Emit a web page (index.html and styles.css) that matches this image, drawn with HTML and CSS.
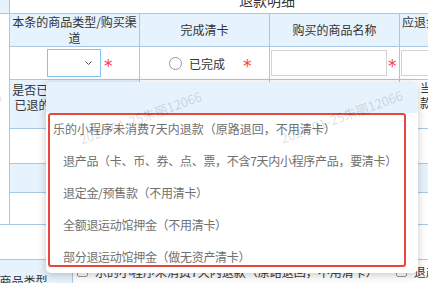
FILE: index.html
```html
<!DOCTYPE html>
<html lang="zh-CN">
<head>
    <meta charset="UTF-8">
    <meta name="viewport" content="width=device-width, initial-scale=1.0">
    <title>退款明细</title>
    <link rel="stylesheet" href="styles.css">
</head>
<body>
<table class="detail">
    <colgroup>
        <col class="col-side">
        <col class="col-type">
        <col class="col-clear">
        <col class="col-name">
        <col class="col-amount">
    </colgroup>
    <tr class="row-title">
        <th class="side"></th>
        <td class="title" colspan="4">退款明细</td>
    </tr>
    <tr class="row-head">
        <td class="side" rowspan="6"></td>
        <th>本条的商品类型/购买渠道</th>
        <th>完成清卡</th>
        <th>购买的商品名称</th>
        <th>应退金额（实际退给客户）</th>
    </tr>
    <tr class="row-input">
        <td>
            <div class="field field-type">
                <div class="select">
                    <svg width="7" height="4" viewBox="0 0 7 4"><path d="M0.5 0.5 L3.5 3.5 L6.5 0.5" stroke="#555" stroke-width="1" fill="none"/></svg>
                </div>
                <span class="req">*</span>
            </div>
        </td>
        <td>
            <div class="field field-clear">
                <span class="radio"></span>
                <span class="radio-text">已完成</span>
                <span class="req req-far">*</span>
            </div>
        </td>
        <td>
            <div class="field field-name">
                <div class="input input-name"></div>
                <span class="req">*</span>
            </div>
        </td>
        <td>
            <div class="field field-amount">
                <div class="input"></div>
            </div>
        </td>
    </tr>
    <tr class="row-used">
        <th class="label-cell">是否已消费/已使用产品<br>已退的产品是否需清卡<br>（必填）</th>
        <td></td>
        <td></td>
        <td class="note">当日余额不足时<br>款项需原路退回</td>
    </tr>
    <tr class="row-blank1">
        <td></td><td></td><td></td><td></td>
    </tr>
    <tr class="row-sub">
        <th></th><th></th><th></th><th></th>
    </tr>
    <tr class="row-blank2">
        <td></td><td></td><td></td><td></td>
    </tr>
    <tr class="row-gap">
        <td colspan="5"></td>
    </tr>
    <tr class="row-types">
        <td colspan="5" class="types-cell">
            <div class="types">
                <div class="types-label">实物商品类型</div>
                <div class="types-list">
                    <div class="types-line">
                        <label class="check"><span class="box"></span>乐的小程序未消费7天内退款（原路退回，不用清卡）</label>
                        <label class="check"><span class="box"></span>退产品（卡、币、券、点、票，不含7天内小程序产品，要清卡）</label>
                    </div>
                    <div class="types-line">
                        <label class="check"><span class="box"></span>退定金/预售款（不用清卡）</label>
                        <label class="check"><span class="box"></span>全额退运动馆押金（不用清卡）</label>
                        <label class="check"><span class="box"></span>部分退运动馆押金（做无资产清卡）</label>
                    </div>
                </div>
            </div>
        </td>
    </tr>
</table>

<!-- 下拉选项（展开状态） -->
<div class="dropdown">
    <div class="option option-blank"></div>
    <div class="option option-first">乐的小程序未消费7天内退款（原路退回，不用清卡）</div>
    <div class="option">退产品（卡、币、券、点、票，不含7天内小程序产品，要清卡）</div>
    <div class="option">退定金/预售款（不用清卡）</div>
    <div class="option">全额退运动馆押金（不用清卡）</div>
    <div class="option">部分退运动馆押金（做无资产清卡）</div>
    <div class="mark"></div>
</div>

<div class="watermark wm-0">2024-01-25朱丽12066</div>
<div class="watermark wm-1">2024-01-25朱丽12066</div>
<div class="watermark wm-2">2024-01-25朱丽12066</div>
</body>
</html>
```

FILE: styles.css
```css
html, body {
    margin: 0;
    overflow: hidden;
    background: #fff;
}
body {
    font-family: "Noto Sans CJK SC", "Microsoft YaHei", sans-serif;
    font-size: 12px;
    color: #333;
}
.detail {
    border-collapse: collapse;
    table-layout: fixed;
    width: 574px;
    margin-left: -50px;
    margin-top: -14px;
}
.col-side { width: 59px; }
.col-type { width: 130px; }
.col-clear { width: 130px; }
.col-name { width: 130px; }
.col-amount { width: 125px; }
.detail td, .detail th {
    border: 1px solid #a8c8e4;
    padding: 0;
    font-weight: normal;
    text-align: center;
}
.detail th {
    background: #e6f2fc;
}
.row-title { height: 27px; }
.row-head { height: 33px; }
.row-input { height: 33px; }
.row-used { height: 49px; }
.row-blank1 { height: 35px; }
.row-sub { height: 29px; }
.row-blank2 { height: 32px; }
.row-gap { height: 35px; }
.row-types { height: 40px; }
.title {
    font-size: 14px;
    font-weight: bold;
    color: #333;
}
.row-head th {
    line-height: 16px;
    padding: 0 2px;
}
.row-used th {
    line-height: 15px;
}
.note {
    vertical-align: top;
    line-height: 15px;
    padding-top: 1px;
}
.field {
    display: flex;
    align-items: center;
}
.field-type {
    padding-left: 37px;
    gap: 3px;
}
.select {
    width: 54px;
    height: 28px;
    border: 1px solid #83c5f1;
    background: #fff;
    display: flex;
    align-items: center;
    justify-content: flex-end;
    padding-right: 8px;
    box-sizing: border-box;
}
.select svg {
    display: block;
}
.req {
    color: #ff3b3b;
    font-family: "DejaVu Sans", sans-serif;
    font-size: 17px;
    line-height: 18px;
    padding-top: 5px;
}
.field-clear {
    padding-left: 29px;
}
.radio {
    width: 13px;
    height: 13px;
    border: 1px solid #999;
    border-radius: 50%;
    box-sizing: border-box;
    margin-right: 7px;
}
.radio-text {
    color: #333;
}
.req-far {
    margin-left: 18px;
}
.field-name {
    padding-left: 1px;
    gap: 1px;
}
.input {
    height: 26px;
    border: 1px solid #d4d4d4;
    background: #fff;
    box-sizing: border-box;
    flex: 1;
}
.input-name {
    flex: none;
    width: 116px;
}
.field-amount {
    padding-left: 1px;
    padding-right: 4px;
}
.types-cell {
    vertical-align: top;
}
.types {
    display: flex;
    height: 40px;
}
.types-label {
    width: 122px;
    flex: none;
    background: #e6f2fc;
    border-right: 1px solid #a8c8e4;
    display: flex;
    align-items: center;
    justify-content: center;
    box-sizing: border-box;
}
.types-list {
    padding: 3px 0 0 4px;
    overflow: hidden;
}
.types-line {
    display: flex;
    gap: 18px;
    white-space: nowrap;
    line-height: 17px;
}
.check {
    display: flex;
    align-items: center;
    color: #333;
}
.check .box {
    width: 11px;
    height: 11px;
    border: 1px solid #999;
    border-radius: 2px;
    box-sizing: border-box;
    margin-right: 7px;
    background: #fff;
}
.dropdown {
    position: absolute;
    left: 46px;
    top: 82px;
    width: 372px;
    background: #fff;
    border-radius: 5px;
    box-shadow: 0 2px 8px rgba(0, 0, 0, 0.22);
    overflow: hidden;
}
.option {
    height: 32px;
    line-height: 32px;
    padding-left: 17px;
    color: #707070;
    white-space: nowrap;
    letter-spacing: -0.3px;
}
.option-blank {
    height: 31px;
    background: #e6f2fc;
}
.option-first {
    padding-left: 7px;
    letter-spacing: 0;
}
.mark {
    position: absolute;
    left: 2px;
    top: 31px;
    width: 358px;
    height: 154px;
    border: 2px solid #e8453c;
    border-radius: 3px;
    box-sizing: border-box;
}
.watermark {
    position: absolute;
    font-size: 13px;
    color: rgba(0, 0, 0, 0.15);
    white-space: nowrap;
    transform: rotate(-20deg);
    pointer-events: none;
}
.wm-0 { left: -124px; top: 108px; }
.wm-1 { left: 76px; top: 108px; }
.wm-2 { left: 277px; top: 107px; }
```
